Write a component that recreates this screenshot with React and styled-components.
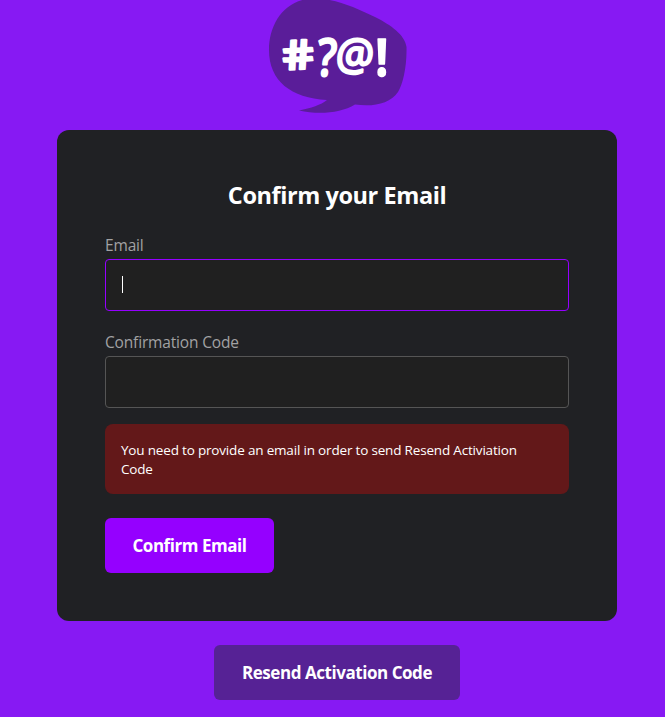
import React from "react";
import styled, { createGlobalStyle } from "styled-components";

const GlobalStyle = createGlobalStyle`
  * { box-sizing: border-box; }
  body {
    margin: 0;
    overflow: hidden;
    background: #8719f3;
    font-family: "Open Sans", "Noto Sans", sans-serif;
    color: #fff;
  }
`;

const Page = styled.main`
  width: 560px;
  height: 717px;
  margin-left: 57px;
  display: flex;
  flex-direction: column;
  align-items: center;
`;

const Logo = styled.svg`
  display: block;
  flex: none;
  width: 155px;
  height: 130px;
  margin-left: 1px;
`;

const LogoGlyph = styled.text`
  font-family: "Open Sans", sans-serif;
  font-weight: ${(p) => p.$weight || 700};
  font-size: 40px;
  fill: #fff;
  stroke: #fff;
  stroke-width: ${(p) => p.$stroke}px;
  stroke-linejoin: round;
`;

const Card = styled.form`
  width: 100%;
  height: 491px;
  flex: none;
  padding: 47px 48px 48px;
  border-radius: 12px;
  background: #202124;
`;

const Title = styled.h1`
  margin: 0 0 22px;
  font-size: 23.5px;
  line-height: 36px;
  font-weight: 700;
  letter-spacing: -0.43px;
  text-align: center;
`;

const Field = styled.div`
  margin-bottom: ${(p) => p.$gap}px;
`;

const FieldLabel = styled.label`
  display: block;
  height: 24px;
  font-size: 15.5px;
  line-height: 21px;
  letter-spacing: -0.16px;
  color: #a2a2a3;
`;

const Input = styled.div`
  display: flex;
  align-items: center;
  height: 52px;
  padding: 0 16px 2px;
  border: 1px solid ${(p) => (p.$active ? "#9500ff" : "#555")};
  border-radius: 4px;
  background: #202020;
`;

const Caret = styled.span`
  width: 1px;
  height: 17px;
  background: #fff;
`;

const Alert = styled.div`
  height: 70px;
  margin-bottom: 24px;
  padding: 17px 32px 17px 16px;
  border-radius: 8px;
  background: #631819;
  font-size: 13.5px;
  line-height: 19px;
  letter-spacing: -0.18px;
`;

const Button = styled.button`
  display: block;
  flex: none;
  width: ${(p) => p.$width}px;
  height: 55px;
  padding: 1px 0 0;
  border: 0;
  border-radius: 6px;
  margin-top: ${(p) => p.$top || 0}px;
  background: ${(p) => (p.$muted ? "#562295" : "#9500ff")};
  color: #fff;
  font: 700 17px/24px "Open Sans", "Noto Sans", sans-serif;
  letter-spacing: -0.45px;
  white-space: nowrap;
`;

function SpeechLogo() {
  return (
    <Logo viewBox="260 0 155 130" aria-label="#?@!">
      <path
        d="M307 -1C282 3 269 26 269 50C269 81 291 98 327 100C321 105 311 108 299 110.500C319 115 341 113 355 104.500C373 107 390 104 398 92C403 84 407 66 406.500 47C405 35 391 25 375 17C354 7 330 -4 307 -1Z"
        fill="#5a1d99"
      />
      <LogoGlyph $weight={600} $stroke={2.2} transform="translate(284.500 70) rotate(-3) skewX(7) scale(1.24 1.02)">#</LogoGlyph>
      <LogoGlyph $weight={600} $stroke={1.2} transform="translate(316 76) skewX(-4) scale(1.08 1.31)">?</LogoGlyph>
      <LogoGlyph $weight={400} $stroke={2.2} transform="translate(335 70) skewX(-4) scale(1.06 1.1)">@</LogoGlyph>
      <LogoGlyph $weight={700} $stroke={1.2} transform="translate(375.500 76) scale(1.1 1.31)">!</LogoGlyph>
    </Logo>
  );
}

export default function App() {
  return (
    <>
      <GlobalStyle />
      <Page>
        <SpeechLogo />
        <Card>
          <Title>Confirm your Email</Title>
          <Field $gap={21}>
            <FieldLabel>Email</FieldLabel>
            <Input $active role="textbox" aria-label="Email">
              <Caret />
            </Input>
          </Field>
          <Field $gap={16}>
            <FieldLabel>Confirmation Code</FieldLabel>
            <Input role="textbox" aria-label="Confirmation Code" />
          </Field>
          <Alert role="alert">
            You need to provide an email in order to send Resend Activiation
            Code
          </Alert>
          <Button type="button" $width={169}>Confirm Email</Button>
        </Card>
        <Button type="button" $width={246} $top={24} $muted>
          Resend Activation Code
        </Button>
      </Page>
    </>
  );
}
